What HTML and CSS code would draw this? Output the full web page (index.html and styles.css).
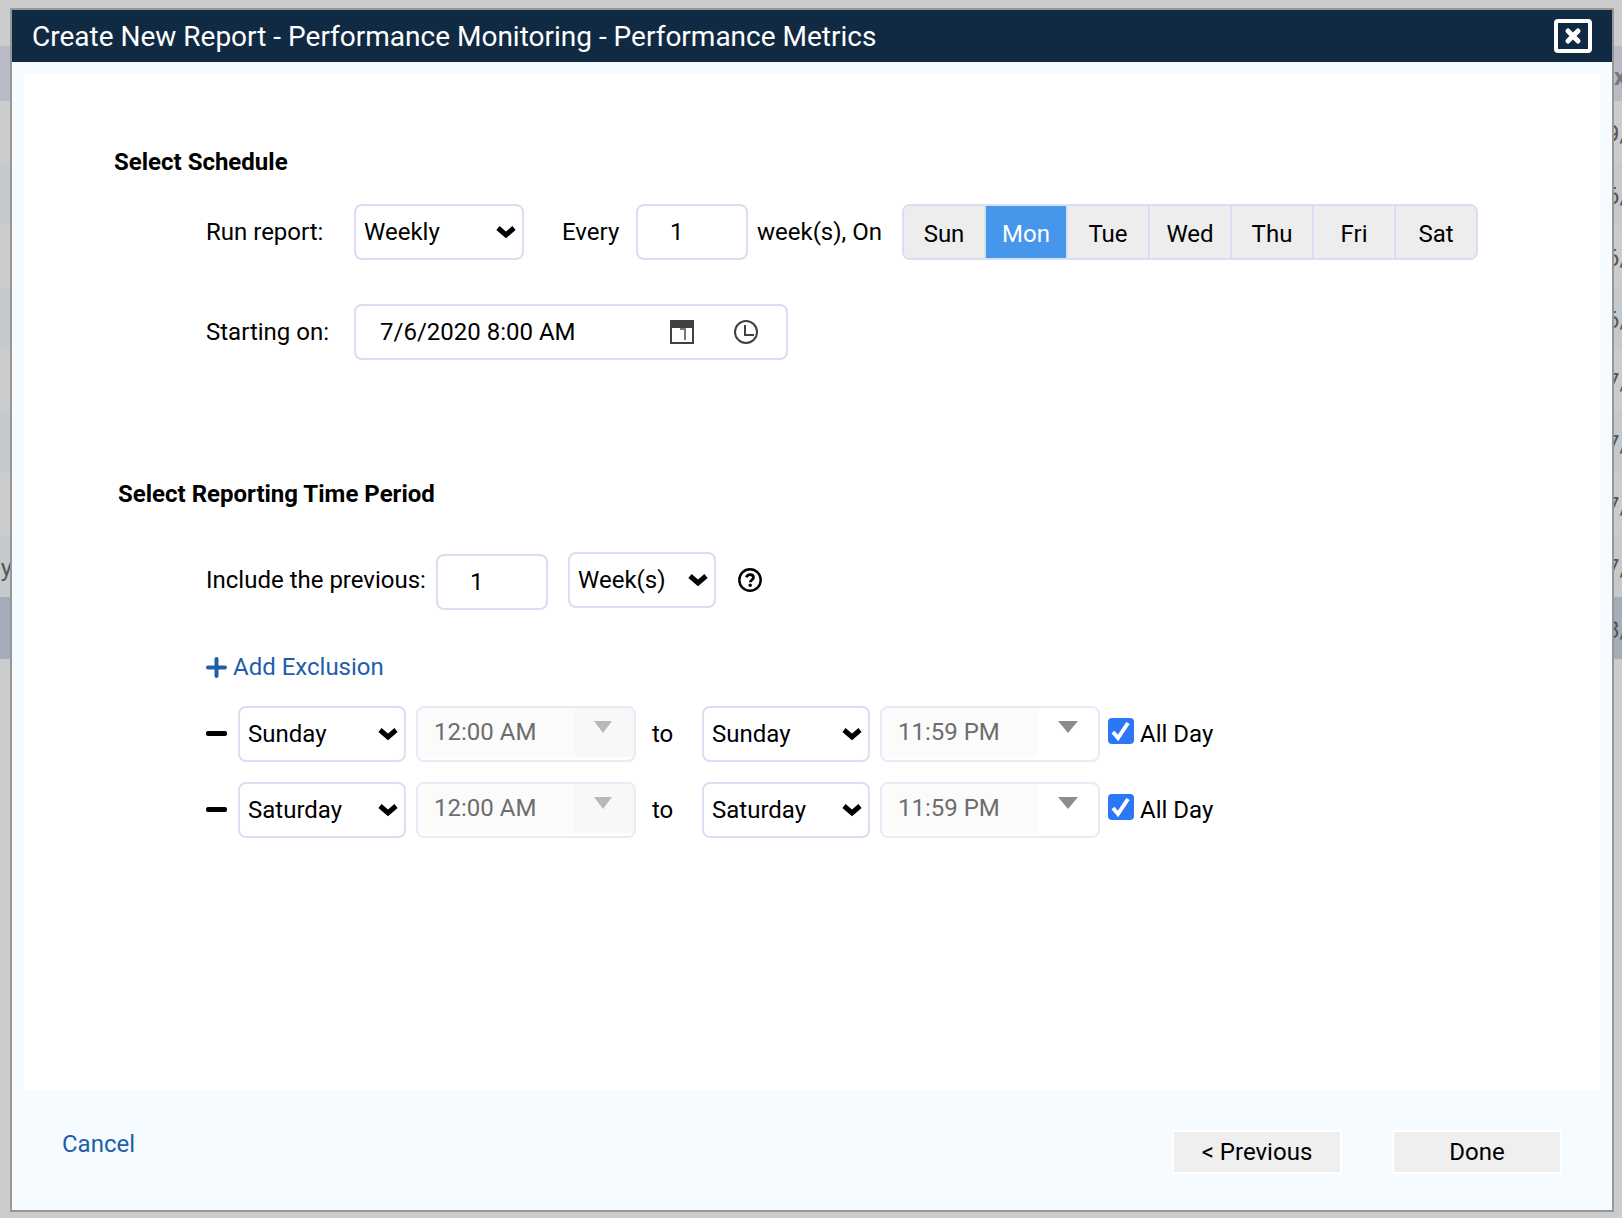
FILE: index.html
```html
<!DOCTYPE html>
<html lang="en">
  <head>
    <meta charset="UTF-8" />
    <meta name="viewport" content="width=device-width, initial-scale=1.0" />
    <title>Create New Report</title>
    <link rel="stylesheet" href="styles.css">
  </head>
  <body>
    <table class="reports">
      <thead>
        <tr><th class="name"></th><th></th><th class="next">x</th></tr>
      </thead>
      <tbody>
        <tr><td></td><td></td><td class="next">9/</td></tr>
        <tr class="alt"><td></td><td></td><td class="next">6/</td></tr>
        <tr><td></td><td></td><td class="next">6/</td></tr>
        <tr class="alt"><td></td><td></td><td class="next">6/</td></tr>
        <tr><td></td><td></td><td class="next">7/</td></tr>
        <tr class="alt"><td></td><td></td><td class="next">7/</td></tr>
        <tr><td></td><td></td><td class="next">7/</td></tr>
        <tr class="alt"><td class="name">ay</td><td></td><td class="next">7/</td></tr>
        <tr class="selected"><td></td><td></td><td class="next">8/</td></tr>
      </tbody>
    </table>

    <div class="modal" role="dialog" aria-labelledby="modal-title">
      <header class="modal-header">
        <h1 id="modal-title">Create New Report - Performance Monitoring - Performance Metrics</h1>
        <button type="button" class="close" aria-label="Close">
          <svg width="38" height="34" viewBox="0 0 38 34">
            <rect x="2" y="2" width="34" height="30" rx="2" fill="none" stroke="#fff" stroke-width="4" />
            <path d="M14 12l10 10M24 12l-10 10" stroke="#fff" stroke-width="5" stroke-linecap="round" />
          </svg>
        </button>
      </header>

      <form class="modal-form">
        <div class="modal-body">
          <section class="schedule">
            <h2>Select Schedule</h2>
            <div class="row">
              <label class="row-label" for="run">Run report:</label>
              <select id="run" class="run">
                <option>Weekly</option>
              </select>
              <label class="every" for="every">Every</label>
              <input type="text" id="every" class="count" value="1" />
              <span class="unit">week(s), On</span>
              <div class="days">
                <button type="button">Sun</button>
                <button type="button" class="active">Mon</button>
                <button type="button">Tue</button>
                <button type="button">Wed</button>
                <button type="button">Thu</button>
                <button type="button">Fri</button>
                <button type="button">Sat</button>
              </div>
            </div>
            <div class="row">
              <label class="row-label" for="start">Starting on:</label>
              <div class="datetime">
                <input type="text" id="start" value="7/6/2020 8:00 AM" />
                <button type="button" aria-label="Pick a date">
                  <svg width="24" height="24" viewBox="0 0 24 24">
                    <rect x="1" y="1" width="22" height="22" fill="#fff" stroke="#404040" stroke-width="2" />
                    <path d="M0 0h24v8H0z" fill="#404040" />
                    <path d="M10 9h5v11" fill="none" stroke="#777" stroke-width="2" />
                  </svg>
                </button>
                <button type="button" aria-label="Pick a time">
                  <svg width="24" height="24" viewBox="0 0 24 24" fill="none" stroke="#404040" stroke-width="2">
                    <circle cx="12" cy="12" r="11" />
                    <path d="M11 5v10h9" />
                  </svg>
                </button>
              </div>
            </div>
          </section>

          <section class="period">
            <h2>Select Reporting Time Period</h2>
            <div class="row">
              <label class="previous-label" for="previous">Include the previous:</label>
              <input type="text" id="previous" class="count" value="1" />
              <select class="period-unit" aria-label="Period unit">
                <option>Week(s)</option>
              </select>
              <button type="button" class="help" aria-label="Help">
                <svg width="24" height="24" viewBox="0 0 24 24" fill="none" stroke="#000">
                  <circle cx="12" cy="12" r="10.7" stroke-width="2.4" />
                  <path d="M8.4 9.4C9 7.500 10.300 6.700 12 6.700c2 0 3.500 1.200 3.500 2.900 0 2.300-3.200 2.300-3.200 4.600" stroke-width="2.800" />
                  <circle cx="12.200" cy="17.200" r="1.700" fill="#000" stroke="none" />
                </svg>
              </button>
            </div>

            <a href="#" class="add">
              <svg width="21" height="21" viewBox="0 0 21 21">
                <path d="M10.500 2v17M2 10.500h17" stroke="#1f5ea8" stroke-width="4" stroke-linecap="round" />
              </svg>
              Add Exclusion
            </a>

            <div class="exclusion">
              <button type="button" class="remove" aria-label="Remove exclusion">
                <svg width="21" height="5" viewBox="0 0 21 5"><rect width="21" height="5" rx="2" /></svg>
              </button>
              <select class="day" aria-label="From day">
                <option>Sunday</option>
              </select>
              <div class="time from">
                <input type="text" value="12:00 AM" aria-label="From time" disabled />
                <button type="button" aria-label="Choose from time" disabled>
                  <svg width="18" height="12" viewBox="0 0 18 12"><path d="M0 0h18L9 12z" fill="currentColor" /></svg>
                </button>
              </div>
              <span class="to">to</span>
              <select class="day" aria-label="To day">
                <option>Sunday</option>
              </select>
              <div class="time until">
                <input type="text" value="11:59 PM" aria-label="To time" disabled />
                <button type="button" aria-label="Choose to time" disabled>
                  <svg width="20" height="12" viewBox="0 0 20 12"><path d="M0 0h20L10 12z" fill="currentColor" /></svg>
                </button>
              </div>
              <input type="checkbox" id="allday-1" checked />
              <label for="allday-1">All Day</label>
            </div>

            <div class="exclusion">
              <button type="button" class="remove" aria-label="Remove exclusion">
                <svg width="21" height="5" viewBox="0 0 21 5"><rect width="21" height="5" rx="2" /></svg>
              </button>
              <select class="day" aria-label="From day">
                <option>Saturday</option>
              </select>
              <div class="time from">
                <input type="text" value="12:00 AM" aria-label="From time" disabled />
                <button type="button" aria-label="Choose from time" disabled>
                  <svg width="18" height="12" viewBox="0 0 18 12"><path d="M0 0h18L9 12z" fill="currentColor" /></svg>
                </button>
              </div>
              <span class="to">to</span>
              <select class="day" aria-label="To day">
                <option>Saturday</option>
              </select>
              <div class="time until">
                <input type="text" value="11:59 PM" aria-label="To time" disabled />
                <button type="button" aria-label="Choose to time" disabled>
                  <svg width="20" height="12" viewBox="0 0 20 12"><path d="M0 0h20L10 12z" fill="currentColor" /></svg>
                </button>
              </div>
              <input type="checkbox" id="allday-2" checked />
              <label for="allday-2">All Day</label>
            </div>
          </section>
        </div>

        <footer class="modal-footer">
          <a href="#" class="cancel">Cancel</a>
          <button type="button">&lt; Previous</button>
          <button type="submit">Done</button>
        </footer>
      </form>
    </div>
  </body>
</html>
```
FILE: styles.css
```css
* {
  box-sizing: border-box;
}

body {
  margin: 0;
  min-height: 100vh;
  padding-top: 46px;
  background: #cccccc;
  color: #000;
  font-family: Roboto, sans-serif;
  font-size: 24px;
  line-height: 28px;
  overflow: hidden;
}

button,
input,
select {
  margin: 0;
  font: inherit;
  color: inherit;
}

button {
  padding: 0;
  border: none;
  background: none;
  cursor: pointer;
}

svg {
  display: block;
}

a {
  color: #1f5ea8;
  text-decoration: none;
}

/* page behind the dialog */
.reports {
  width: 100%;
  table-layout: fixed;
  border-collapse: collapse;
  color: #555;
}

.reports th {
  height: 55px;
  padding: 6px 0 0;
  background: #b8bac5;
  color: #777;
}

.reports td {
  height: 62px;
  padding: 4px 0 0;
}

.reports .name {
  width: 12px;
  direction: rtl;
  white-space: nowrap;
}

.reports .next {
  width: 16px;
  text-align: left;
}

.reports th.next {
  padding-left: 8px;
}

.reports .alt {
  background: #c5c9cc;
}

.reports .selected {
  background: #a4adb9;
}

/* dialog */
.modal {
  position: fixed;
  inset: 8px 8px 6px 10px;
  display: flex;
  flex-direction: column;
  border: 2px solid #969798;
  background: #f5fbff;
}

.modal-header {
  display: flex;
  align-items: center;
  justify-content: space-between;
  height: 52px;
  padding: 0 20px;
  background: #112a43;
  color: #fff;
}

.modal-header h1 {
  margin: 0;
  padding-top: 2px;
  font-size: 28px;
  font-weight: 400;
}

.modal-form {
  flex: 1;
  display: flex;
  flex-direction: column;
}

.modal-body {
  flex: 1;
  margin: 12px 12px 0;
  padding: 74px 90px 0;
  background: #fff;
}

.modal-body h2 {
  margin: 0;
  font-size: 24px;
  font-weight: 700;
}

.period {
  margin-top: 120px;
}

.period h2 {
  padding-left: 4px;
}

.row {
  display: flex;
  align-items: center;
  margin-top: 44px;
  padding-left: 92px;
}

h2 + .row {
  margin-top: 28px;
}

.period h2 + .row {
  margin-top: 42px;
}

.row-label {
  width: 148px;
}

.row input,
.row select,
.day,
.datetime,
.days,
.time {
  height: 56px;
  border: 2px solid #d9def0;
  border-radius: 8px;
  background: #fff;
}

select {
  appearance: none;
  padding: 0 8px;
}

.row select,
.day {
  background: #fff url("data:image/svg+xml,%3Csvg xmlns='http://www.w3.org/2000/svg' width='20' height='14'%3E%3Cpath d='M2 3l8 7 8-7' fill='none' stroke='%23000' stroke-width='5'/%3E%3C/svg%3E") no-repeat right 6px center;
}

.row .run {
  width: 170px;
}

.every {
  width: 112px;
  padding-left: 38px;
}

.row .count {
  width: 112px;
  padding: 0 32px;
}

.period .count {
  margin-top: 4px;
}

.unit {
  width: 154px;
  padding-left: 9px;
}

.days {
  display: flex;
  overflow: hidden;
}

.days button {
  width: 82px;
  padding-top: 4px;
  border-right: 2px solid #d9def0;
  background: #ededed;
}

.days button:last-child {
  width: 80px;
  border-right: none;
}

.days .active {
  background: #4696ec;
  color: #fff;
}

.datetime {
  display: flex;
  align-items: center;
  gap: 40px;
  width: 434px;
  padding: 0 28px 0 24px;
}

.row .datetime input {
  flex: 1;
  min-width: 0;
  height: 52px;
  padding: 0;
  border: none;
}

.previous-label {
  width: 230px;
}

.row .period-unit {
  width: 148px;
  margin-left: 20px;
}

.help {
  margin-left: 22px;
}

.add {
  display: flex;
  align-items: center;
  gap: 6px;
  width: max-content;
  margin: 43px 0 25px 92px;
}

.exclusion {
  display: flex;
  align-items: center;
  margin-bottom: 20px;
  padding-left: 92px;
}

.remove {
  width: 32px;
  padding-bottom: 2px;
}

.day {
  width: 168px;
}

.time {
  display: flex;
  width: 220px;
  margin-left: 10px;
  border-color: #e8ebf7;
  overflow: hidden;
}

.time input {
  width: 156px;
  height: 49px;
  padding: 0 16px 2px;
  border: none;
  background: #fbfbfb;
  color: #6d6d6d;
}

.time button {
  flex: 1;
  height: 49px;
  padding: 0 0 12px 20px;
  color: #8c8c8c;
}

.from button {
  background: #f8f8f8;
  color: #b8b8b8;
}

.to {
  width: 66px;
  padding-left: 16px;
}

.exclusion input[type='checkbox'] {
  appearance: none;
  width: 26px;
  height: 26px;
  margin: 0 6px 6px 8px;
  border-radius: 4px;
  background: #2b77f8 url("data:image/svg+xml,%3Csvg xmlns='http://www.w3.org/2000/svg' width='26' height='26'%3E%3Cpath d='M5 14l5 6L20 5' fill='none' stroke='%23fff' stroke-width='4'/%3E%3C/svg%3E") no-repeat center;
}

.modal-footer {
  display: flex;
  gap: 50px;
  padding: 40px 50px 36px;
}

.cancel {
  margin-right: auto;
}

.modal-footer button {
  width: 170px;
  height: 44px;
  border: 2px solid #fff;
  background: #efefef;
}
```
